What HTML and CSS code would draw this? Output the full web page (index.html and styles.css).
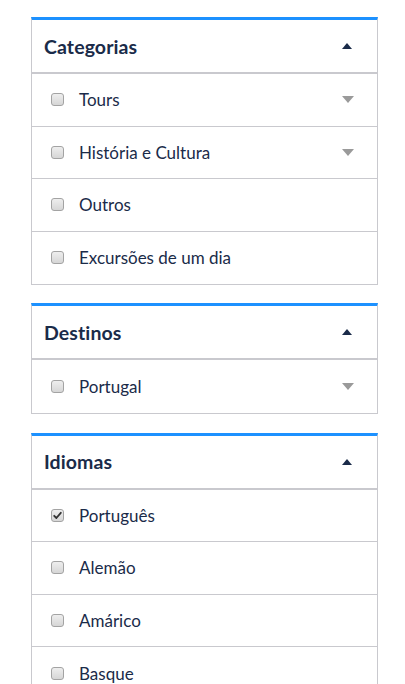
FILE: index.html
```html
<!DOCTYPE html>
<html lang="pt">
<head>
<meta charset="utf-8">
<link rel="stylesheet" href="styles.css">
</head>
<body>
<div class="filters">
  <section class="panel panel-cat">
    <div class="head"><span class="title">Categorias</span><span class="up"></span></div>
    <div class="row"><span class="box"></span><span class="label">Tours</span><span class="down"></span></div>
    <div class="row"><span class="box"></span><span class="label">História e Cultura</span><span class="down"></span></div>
    <div class="row"><span class="box"></span><span class="label">Outros</span></div>
    <div class="row"><span class="box"></span><span class="label">Excursões de um dia</span></div>
  </section>
  <section class="panel panel-dest">
    <div class="head"><span class="title">Destinos</span><span class="up"></span></div>
    <div class="row"><span class="box"></span><span class="label">Portugal</span><span class="down"></span></div>
  </section>
  <section class="panel panel-lang">
    <div class="head"><span class="title">Idiomas</span><span class="up"></span></div>
    <div class="row"><span class="box checked"><svg viewBox="0 0 13 13" width="13" height="13"><path d="M3.2 6.8 L5.4 9 L9.8 3.8" fill="none" stroke="#333" stroke-width="1.8" stroke-linecap="round" stroke-linejoin="round"/></svg></span><span class="label">Português</span></div>
    <div class="row"><span class="box"></span><span class="label">Alemão</span></div>
    <div class="row"><span class="box"></span><span class="label">Amárico</span></div>
    <div class="row"><span class="box"></span><span class="label">Basque</span></div>
  </section>
</div>
</body>
</html>
```
FILE: styles.css
```css
* { box-sizing: border-box; }
html, body { margin: 0; padding: 0; background: #fff; }
body {
  font-family: Lato, "Open Sans", sans-serif;
  color: #1a2b49;
  padding: 17px 27px 0 31px;
}
.filters { display: flex; flex-direction: column; }
.panel {
  border: 1px solid #c9c9ce;
  border-top: 3px solid #1c91ff;
  width: 347px;
}
.panel-cat { margin-bottom: 18px; }
.panel-dest { margin-bottom: 19px; }
.head {
  height: 54px;
  border-bottom: 2px solid #c9c9ce;
  display: flex;
  align-items: center;
  justify-content: space-between;
  padding: 0 24px 0 12px;
}
.title { font-size: 19.5px; font-weight: 700; letter-spacing: 0.1px; }
.up {
  width: 0; height: 0;
  border-left: 5px solid transparent;
  border-right: 5px solid transparent;
  border-bottom: 6px solid #1a2b49;
  margin-right: 1px;
}
.row {
  height: 52.5px;
  display: flex;
  align-items: center;
  padding: 0 23px 0 19px;
  border-bottom: 1px solid #c9c9ce;
}
.row:last-child { border-bottom: none; }
.box {
  width: 13px; height: 13px;
  border: 1px solid #a3a3a3;
  border-radius: 3px;
  background: linear-gradient(#eeeeee, #d6d6d6);
  flex: none;
  display: flex;
}
.box svg { margin: -1px; }
.label { font-size: 17px; margin-left: 15px; flex: 1; }
.down {
  width: 0; height: 0;
  border-left: 6.5px solid transparent;
  border-right: 6.5px solid transparent;
  border-top: 7px solid #9a9a9a;
}
```
